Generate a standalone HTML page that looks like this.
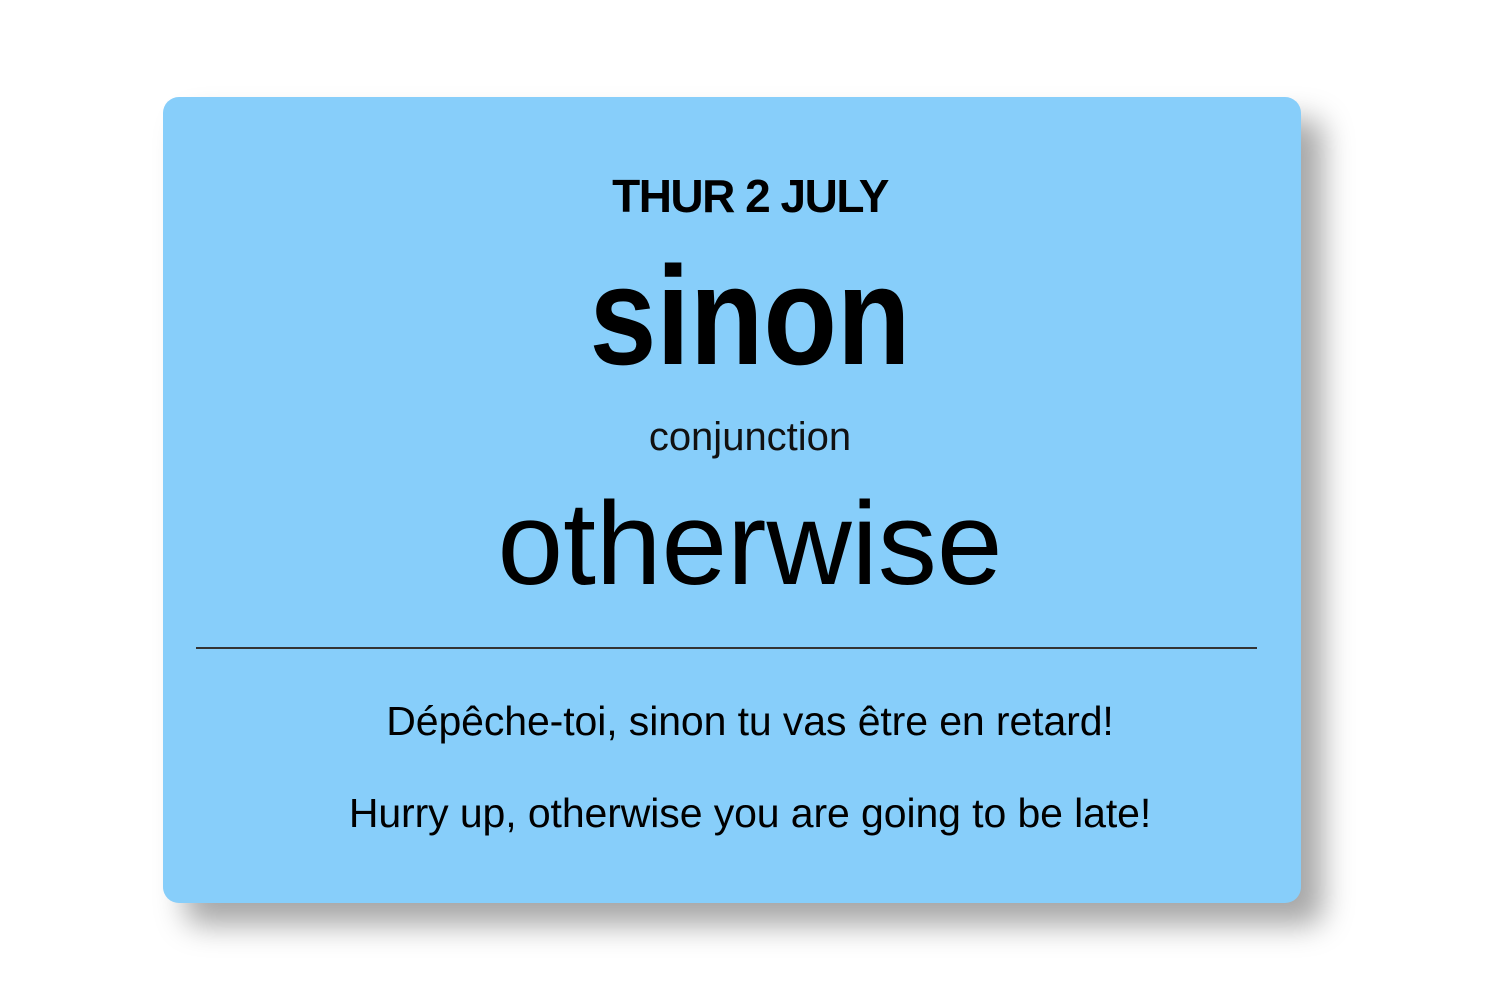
<!DOCTYPE html>
<html><head><meta charset="utf-8"><style>
html,body{margin:0;padding:0;background:#fff;width:1500px;height:1000px;overflow:hidden;font-family:"Liberation Sans",sans-serif;}
.card{position:absolute;left:163px;top:97px;width:1138px;height:806px;background:#87cefa;border-radius:16px;box-shadow:22px 22px 30px rgba(0,0,0,0.35);}
.t{position:absolute;left:0;width:1500px;text-align:center;line-height:1;white-space:nowrap;color:#000;}
.hr{position:absolute;left:196px;top:647px;width:1061px;height:2px;background:#333;}
</style></head><body>
<div class="card"></div>
<div class="t" style="top:173px;font-size:46px;font-weight:bold;letter-spacing:-1.5px;">THUR 2 JULY</div>
<div class="t" style="top:246px;font-size:140px;font-weight:bold;transform:scaleX(0.86);">sinon</div>
<div class="t" style="top:417px;font-size:40px;color:#111;font-weight:300;">conjunction</div>
<div class="t" style="top:485px;font-size:118px;">otherwise</div>
<div class="hr"></div>
<div class="t" style="top:701px;font-size:41px;letter-spacing:-0.1px;">Dépêche-toi, sinon tu vas être en retard!</div>
<div class="t" style="top:793px;font-size:41px;letter-spacing:-0.1px;">Hurry up, otherwise you are going to be late!</div>
</body></html>
